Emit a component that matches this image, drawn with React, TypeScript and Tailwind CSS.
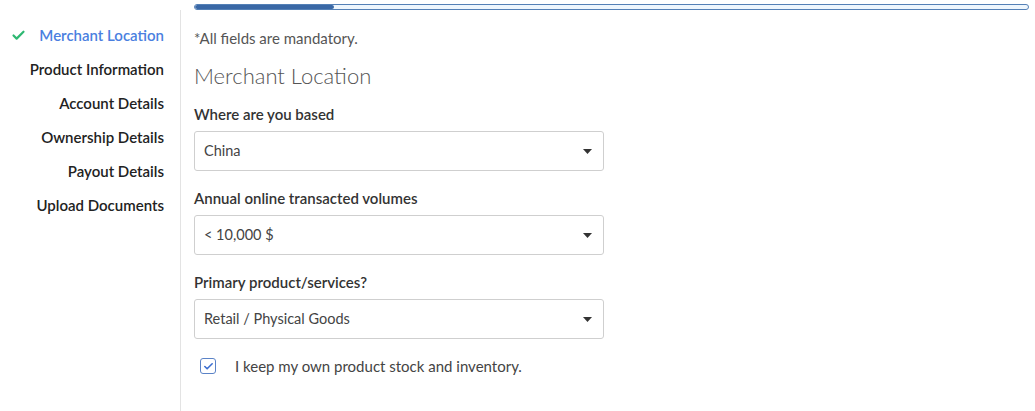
import { Check } from "lucide-react";

const steps = [
  "Merchant Location",
  "Product Information",
  "Account Details",
  "Ownership Details",
  "Payout Details",
  "Upload Documents",
];

function Select({ value }: { value: string }) {
  return (
    <div className="w-[410px] h-[40px] border border-[#cfcfcf] rounded-[3px] bg-white flex items-center justify-between pl-[9px] pr-[10px]">
      <span className="text-[14.5px] text-[#444]">{value}</span>
      <svg width="9" height="5" viewBox="0 0 9 5" className="mr-[1px]">
        <path d="M0 0 H9 L4.5 5 Z" fill="#333" />
      </svg>
    </div>
  );
}

function Field({ label, value }: { label: string; value: string }) {
  return (
    <div className="flex flex-col">
      <label className="text-[15px] font-semibold text-[#333] leading-[18px] mb-[8px]">{label}</label>
      <Select value={value} />
    </div>
  );
}

export default function App() {
  return (
    <div
      className="w-[1035px] h-[411px] bg-white flex overflow-hidden"
      style={{ fontFamily: "Lato, 'Open Sans', Arial, sans-serif" }}
    >
      <aside className="w-[180px] shrink-0 pt-[18px] pr-[16px]">
        <ul className="flex flex-col">
          {steps.map((s, i) => (
            <li key={s} className="h-[34px] flex items-center justify-end gap-[13px]">
              {i === 0 && <Check className="w-[15px] h-[15px] text-[#2eb872]" strokeWidth={3.5} />}
              <span
                className={
                  "text-[15px] font-semibold " + (i === 0 ? "text-[#4a7fe0]" : "text-[#222]")
                }
              >
                {s}
              </span>
            </li>
          ))}
        </ul>
      </aside>
      <div className="mt-[10px] w-px bg-[#e3e3e3] shrink-0" />
      <main className="flex-1 pl-[13px] pr-[6px] pt-[4px]">
        <div className="h-[6px] rounded-full border border-[#5480b6] bg-[#eef6fd] overflow-hidden">
          <div className="h-full w-[139px] bg-[#3a68a6] rounded-full" />
        </div>
        <p className="mt-[19px] text-[15px] text-[#555] leading-[18px]">*All fields are mandatory.</p>
        <h2 className="mt-[16px] text-[22px] font-light text-[#555] leading-[26px]">Merchant Location</h2>
        <div className="mt-[16px] flex flex-col gap-[18px]">
          <Field label="Where are you based" value="China" />
          <Field label="Annual online transacted volumes" value="< 10,000 $" />
          <Field label="Primary product/services?" value="Retail / Physical Goods" />
        </div>
        <label className="mt-[17px] ml-[6px] flex items-center gap-[19px] h-[20px]">
          <span className="w-[16px] h-[16px] border border-[#5b83c7] rounded-[3px] flex items-center justify-center">
            <Check className="w-[11px] h-[11px] text-[#3d6fd0]" strokeWidth={3.5} />
          </span>
          <span className="text-[15px] text-[#444]">I keep my own product stock and inventory.</span>
        </label>
      </main>
    </div>
  );
}
